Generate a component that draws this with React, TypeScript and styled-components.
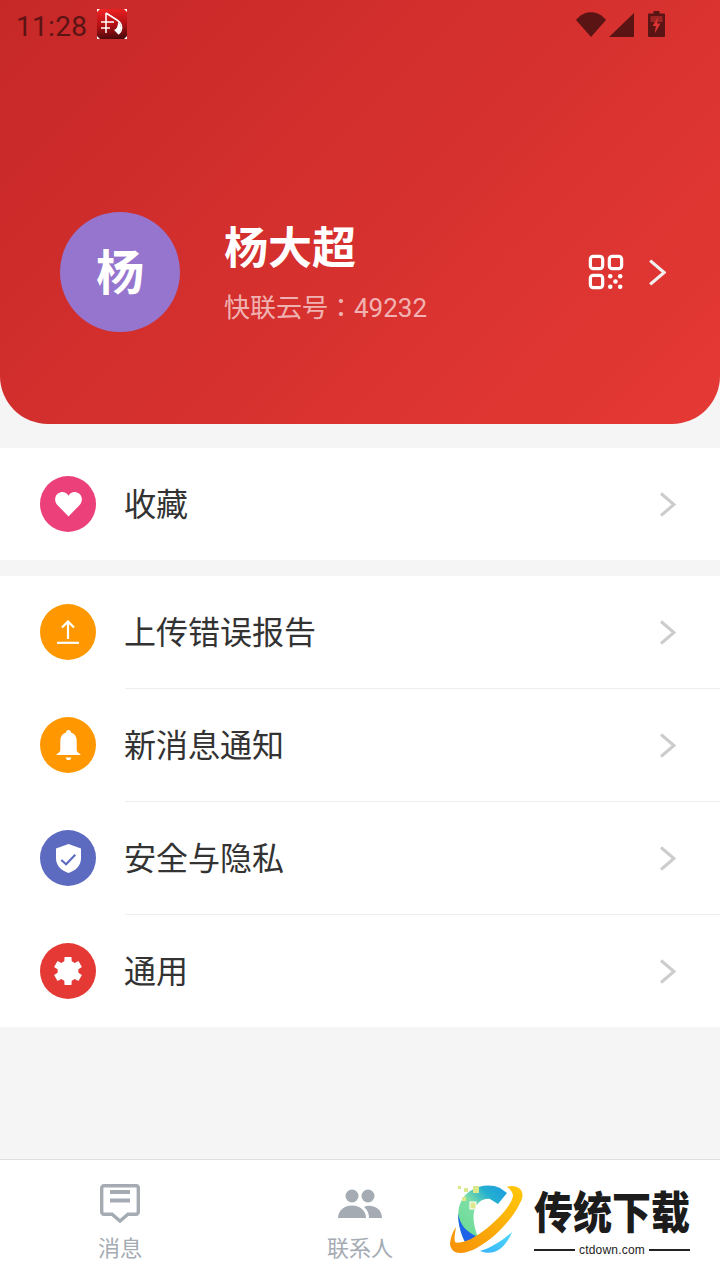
import React from 'react';
import styled, { createGlobalStyle } from 'styled-components';

const CJK = `Roboto, "Noto Sans CJK JP", sans-serif`;

const GlobalStyle = createGlobalStyle`
  html, body {
    margin: 0;
    padding: 0;
    background: #f5f5f5;
    font-family: ${CJK};
  }
  * { box-sizing: border-box; }
`;

const Page = styled.div`
  width: 720px;
  height: 1280px;
  display: flex;
  flex-direction: column;
  background: #f5f5f5;
  overflow: hidden;
  position: relative;
`;

const Header = styled.header`
  height: 424px;
  flex-shrink: 0;
  display: flex;
  flex-direction: column;
  background: linear-gradient(135deg, #c62828 0%, #e53935 100%);
  border-radius: 0 0 48px 48px;
`;

const StatusBar = styled.div`
  height: 48px;
  display: flex;
  align-items: center;
  padding: 0 55px 0 16px;
  color: #5a1414;
`;

const Clock = styled.span`
  font-size: 28px;
  line-height: 48px;
  letter-spacing: 0.3px;
  margin: 5px 10px 0 0;
`;

const StatusRight = styled.div`
  margin-left: auto;
  display: flex;
  align-items: flex-end;
  height: 26px;
  margin-top: -1px;
`;

const Profile = styled.div`
  margin-top: 164px;
  height: 120px;
  display: flex;
  align-items: center;
  padding: 0 54px 0 60px;
`;

const Avatar = styled.div`
  width: 120px;
  height: 120px;
  border-radius: 50%;
  background: #9575cd;
  color: #fff;
  font-size: 48px;
  font-weight: 700;
  padding-bottom: 7px;
  display: flex;
  align-items: center;
  justify-content: center;
  flex-shrink: 0;
`;

const ProfileText = styled.div`
  margin-left: 45px;
  flex: 1;
  display: flex;
  flex-direction: column;
`;

const Name = styled.div`
  color: #fff;
  font-size: 44px;
  font-weight: 700;
  line-height: 60px;
  margin-top: 1px;
  margin-left: -1px;
`;

const Account = styled.div`
  color: rgba(255, 255, 255, 0.65);
  font-size: 26px;
  line-height: 36px;
  margin-top: 11px;
  margin-left: -1px;
`;

const ProfileActions = styled.div`
  display: flex;
  align-items: center;
  gap: 24px;
`;

const Group = styled.section<{ $top: number }>`
  margin-top: ${({ $top }) => $top}px;
  background: #fff;
  flex-shrink: 0;
`;

const Row = styled.div`
  height: 112px;
  display: flex;
  align-items: center;
  padding: 0 44px 0 40px;
`;

const Divider = styled.div`
  height: 1px;
  margin-left: 125px;
  background: #eeeeee;
`;

const RowIcon = styled.div<{ $color: string }>`
  width: 56px;
  height: 56px;
  border-radius: 50%;
  background: ${({ $color }) => $color};
  display: flex;
  align-items: center;
  justify-content: center;
  flex-shrink: 0;
`;

const RowLabel = styled.span`
  margin: -4px 0 0 28px;
  flex: 1;
  font-size: 32px;
  color: #333333;
`;

const TabBar = styled.nav`
  margin-top: auto;
  height: 121px;
  flex-shrink: 0;
  background: #fff;
  border-top: 1px solid #e0e0e0;
  display: grid;
  grid-template-columns: repeat(3, 1fr);
`;

const Tab = styled.div`
  display: flex;
  flex-direction: column;
  align-items: center;
  padding-top: 20px;
  color: #a5abb3;
`;

const TabIconBox = styled.div`
  height: 48px;
  display: flex;
  align-items: center;
  justify-content: center;
`;

const TabLabel = styled.span`
  font-size: 22px;
  line-height: 32px;
  margin-top: 5px;
`;

const Watermark = styled.div`
  position: absolute;
  left: 445px;
  top: 1180px;
  width: 253px;
  height: 80px;
  background: #fff;
  display: flex;
  align-items: flex-start;
`;

const BrandText = styled.div`
  margin-left: 4px;
  width: 156px;
  display: flex;
  flex-direction: column;
`;

const BrandName = styled.div`
  font-family: "Noto Sans CJK SC", sans-serif;
  font-weight: 900;
  font-size: 39px;
  line-height: 40px;
  margin-top: 6px;
  color: #1c1c1c;
  white-space: nowrap;
  transform: scaleY(1.15);
  transform-origin: top;
`;

const BrandUrl = styled.div`
  display: flex;
  align-items: center;
  gap: 4px;
  margin-top: 16px;
  font-family: "Liberation Sans", sans-serif;
  font-size: 12px;
  line-height: 16px;
  letter-spacing: 0.2px;
  color: #222;
`;

const BrandLine = styled.span`
  height: 2px;
  flex: 1;
  background: #222;
`;

const Chevron = ({ color, size = 25 }: { color: string; size?: number }) => (
  <svg width={size * 0.68} height={size} viewBox="0 0 17 25" fill="none">
    <path d="M2 1.5 L15 12.5 L2 23.5" stroke={color} strokeWidth="3" />
  </svg>
);

const NoticeIcon = () => (
  <svg width="30" height="30" viewBox="0 0 30 30">
    <defs>
      <linearGradient id="noticeFill" x1="0.4" y1="0" x2="0.5" y2="1">
        <stop offset="0" stopColor="#ee2222" />
        <stop offset="0.55" stopColor="#b00f14" />
        <stop offset="1" stopColor="#4a0a0c" />
      </linearGradient>
    </defs>
    <rect width="30" height="30" fill="url(#noticeFill)" />
    <path d="M0 0 H3 L0 3 Z M30 0 H27 L30 3 Z M0 30 H3 L0 27 Z M30 30 H27 L30 27 Z" fill="#fff" />
    <path d="M9 4 L20 11 C26 15 26 22 21 25 M9 4 V24 M4 13 H17 M4 19 H13" stroke="#fff" strokeWidth="1.5" fill="none" />
    <path d="M21 13 C25 16 25 22 21 25 L17 21 C20 20 21 17 21 13 Z" fill="#fff" />
  </svg>
);

const WifiIcon = () => (
  <svg width="30" height="25" viewBox="0 0 30 25">
    <path d="M0 8 C8 -2.5 22 -2.5 30 8 L15 25 Z" fill="currentColor" />
  </svg>
);

const SignalIcon = () => (
  <svg width="25" height="24" viewBox="0 0 25 24" style={{ marginLeft: 3 }}>
    <path d="M25 0 V24 H0 Z" fill="currentColor" />
  </svg>
);

const BatteryIcon = () => (
  <svg width="17" height="26" viewBox="0 0 17 26" style={{ marginLeft: 14 }}>
    <path d="M5.5 0 H11.5 V2.5 H16 a1 1 0 0 1 1 1 V25 a1 1 0 0 1 -1 1 H1 a1 1 0 0 1 -1 -1 V3.5 a1 1 0 0 1 1 -1 H5.5 Z" fill="currentColor" />
    <path d="M2.5 5 H14.5 V11 H2.5 Z" fill="#dc3333" opacity="0.5" />
    <path d="M10 6 L4.5 15 H7.8 L6.8 22.5 L12.5 12.5 H9.2 Z" fill="#dc3333" />
  </svg>
);

const QrIcon = () => (
  <svg width="36" height="36" viewBox="0 0 38 38" fill="none" stroke="#fff" strokeWidth="3.4">
    <rect x="2.5" y="2.5" width="13" height="13" rx="3" />
    <rect x="22.5" y="2.5" width="13" height="13" rx="3" />
    <rect x="2.5" y="22.5" width="13" height="13" rx="3" />
    <g fill="#fff" stroke="none">
      <circle cx="23.5" cy="23.5" r="2.4" />
      <circle cx="34" cy="23.5" r="2.4" />
      <circle cx="29" cy="29" r="2.4" />
      <circle cx="23.5" cy="34.5" r="2.4" />
      <circle cx="34" cy="34.5" r="2.4" />
    </g>
  </svg>
);

const HeartIcon = () => (
  <svg width="29" height="26" viewBox="0 0 30 28">
    <path d="M15 27.5 L3 15 C-1 11 0 3 6 1.5 C10 0.5 13 2 15 5 C17 2 20 0.5 24 1.5 C30 3 31 11 27 15 Z" fill="#fff" />
  </svg>
);

const UploadIcon = () => (
  <svg width="22" height="24" viewBox="0 0 22 24" fill="none" stroke="#fff" strokeWidth="2.2">
    <path d="M11 19 V2 M5 7.5 L11 1.5 L17 7.5" />
    <path d="M0 22.8 H22" />
  </svg>
);

const BellIcon = () => (
  <svg width="25" height="31" viewBox="0 0 26 32" fill="#fff">
    <path d="M13 0 C14.5 0 15.5 1 15.6 2.6 C19.5 3.8 21.5 7 21.5 11 V20 C21.5 22.5 23 24 25.5 25 V26 H0.5 V25 C3 24 4.5 22.5 4.5 20 V11 C4.5 7 6.5 3.8 10.4 2.6 C10.5 1 11.5 0 13 0 Z" />
    <path d="M10 28.5 H16 C15.6 30.5 14.5 31.2 13 31.2 C11.5 31.2 10.4 30.5 10 28.5 Z" />
  </svg>
);

const ShieldIcon = () => (
  <svg width="25" height="29" viewBox="0 0 26 30">
    <path d="M13 0 L26 4.5 V15 C26 22.5 20 28 13 30 C6 28 0 22.5 0 15 V4.5 Z" fill="#fff" />
    <path d="M5.5 16.5 L10.5 21 L20 11" stroke="#5c6bc0" strokeWidth="2.2" fill="none" />
  </svg>
);

// six flat teeth, solid centre
function gearPath(cx: number, cy: number, outer: number, root: number) {
  const pts: string[] = [];
  for (let i = 0; i < 6; i++) {
    const a = ((-90 + i * 60) * Math.PI) / 180;
    [
      [root, -0.36],
      [outer, -0.24],
      [outer, 0.24],
      [root, 0.36],
    ].forEach(([r, d]) => {
      pts.push(`${(cx + r * Math.cos(a + d)).toFixed(2)} ${(cy + r * Math.sin(a + d)).toFixed(2)}`);
    });
  }
  return `M${pts.join(' L')} Z`;
}

const GearIcon = () => (
  <svg width="30" height="30" viewBox="0 0 30 30">
    <path d={gearPath(15, 15, 14.5, 10.5)} fill="#fff" />
  </svg>
);

const MessageIcon = () => (
  <svg width="40" height="40" viewBox="0 0 40 40" fill="none">
    <path
      d="M4 1.7 H36 a2.3 2.3 0 0 1 2.3 2.3 V28 a2.3 2.3 0 0 1 -2.3 2.3 H28 L20 37 L12 30.3 H4 a2.3 2.3 0 0 1 -2.3 -2.3 V4 a2.3 2.3 0 0 1 2.3 -2.3 Z"
      stroke="currentColor"
      strokeWidth="3.4"
    />
    <path d="M10 6 H30 V10 H10 Z M10 14.5 H30 V18.5 H10 Z" fill="currentColor" />
  </svg>
);

const ContactsIcon = () => (
  <svg width="44" height="30" viewBox="0 0 44 30" fill="currentColor">
    <circle cx="14" cy="7" r="6.5" />
    <circle cx="30" cy="7" r="6.5" />
    <path d="M0 29 C0 21 7 16.5 14 16.5 C21 16.5 28 21 28 29 Z" />
    <path d="M31 29 C31 24 29 20.5 26 18 C28 16.8 30 16.5 32 16.8 C38 17.5 44 21 44 29 Z" />
  </svg>
);

const LogoMark = () => (
  <svg width="85" height="80" viewBox="0 0 85 80" style={{ flexShrink: 0 }}>
    <defs>
      <linearGradient id="ringFill" x1="0" y1="1" x2="1" y2="0">
        <stop offset="0" stopColor="#f79008" />
        <stop offset="1" stopColor="#ffc80a" />
      </linearGradient>
      <linearGradient id="cFill" x1="0.15" y1="0.75" x2="0.85" y2="0.05">
        <stop offset="0" stopColor="#6fdc9a" />
        <stop offset="0.4" stopColor="#7fdfa6" />
        <stop offset="0.75" stopColor="#25b0cf" />
        <stop offset="1" stopColor="#1fa2dc" />
      </linearGradient>
      <linearGradient id="cresFill" x1="0" y1="1" x2="1" y2="0">
        <stop offset="0" stopColor="#38b4fa" />
        <stop offset="1" stopColor="#4ed8f8" />
      </linearGradient>
    </defs>
    <path d="M14 27 C17 18 21 13 27 10 C34 5 47 4 55 8 L62 13 L53 24 L45 19 C38 18 33 22 30 28 C27 36 29 47 33 57 L20 62 C14 50 12 38 14 27 Z" fill="url(#cFill)" />
    <path d="M13 33 C15 45 21 52 33 57 L20 62 C16 54 13 44 13 33 Z" fill="#1f62ea" />
    <path d="M67 52 C64 60 60 65 55 69 C50 73 42 74 35 71 C46 68 58 60 67 52 Z" fill="url(#cresFill)" />
    <path d="M5 63 C6 56 8 51 11 47 C10 53 9 59 10 62 C13 64 21 61 26 59 C37 53 48 44 58 33 C63 27 68 20 68 15 C67 11 64 8 62 7 C66 5 71 6 74 8 C79 12 78 18 75 23 C71 32 63 43 50 55 C38 65 26 73 15 73 C9 73 5 69 5 63 Z" fill="url(#ringFill)" />
    <g fill="#dce88c">
      <rect x="13" y="6" width="3" height="3" />
      <rect x="19" y="8" width="4" height="4" />
      <rect x="28" y="6" width="6" height="7" />
      <rect x="17" y="17" width="4" height="4" />
      <rect x="25" y="22" width="6" height="7" stroke="#fff" strokeWidth="1" />
    </g>
  </svg>
);

const items = [
  { label: '上传错误报告', color: '#ff9800', icon: <UploadIcon /> },
  { label: '新消息通知', color: '#ff9800', icon: <BellIcon /> },
  { label: '安全与隐私', color: '#5c6bc0', icon: <ShieldIcon /> },
  { label: '通用', color: '#e53935', icon: <GearIcon /> },
];

export default function App() {
  return (
    <Page>
      <GlobalStyle />
      <Header>
        <StatusBar>
          <Clock>11:28</Clock>
          <NoticeIcon />
          <StatusRight>
            <WifiIcon />
            <SignalIcon />
            <BatteryIcon />
          </StatusRight>
        </StatusBar>
        <Profile>
          <Avatar>杨</Avatar>
          <ProfileText>
            <Name>杨大超</Name>
            <Account>快联云号：49232</Account>
          </ProfileText>
          <ProfileActions>
            <QrIcon />
            <Chevron color="#f0f0f0" size={27} />
          </ProfileActions>
        </Profile>
      </Header>

      <Group $top={24}>
        <Row>
          <RowIcon $color="#ec407a">
            <HeartIcon />
          </RowIcon>
          <RowLabel>收藏</RowLabel>
          <Chevron color="#cccccc" />
        </Row>
      </Group>

      <Group $top={16}>
        {items.map((item, i) => (
          <React.Fragment key={item.label}>
            {i > 0 && <Divider />}
            <Row>
              <RowIcon $color={item.color}>{item.icon}</RowIcon>
              <RowLabel>{item.label}</RowLabel>
              <Chevron color="#cccccc" />
            </Row>
          </React.Fragment>
        ))}
      </Group>

      <TabBar>
        <Tab>
          <TabIconBox>
            <MessageIcon />
          </TabIconBox>
          <TabLabel>消息</TabLabel>
        </Tab>
        <Tab>
          <TabIconBox>
            <ContactsIcon />
          </TabIconBox>
          <TabLabel>联系人</TabLabel>
        </Tab>
      </TabBar>

      <Watermark>
        <LogoMark />
        <BrandText>
          <BrandName>传统下载</BrandName>
          <BrandUrl>
            <BrandLine />
            ctdown.com
            <BrandLine />
          </BrandUrl>
        </BrandText>
      </Watermark>
    </Page>
  );
}
